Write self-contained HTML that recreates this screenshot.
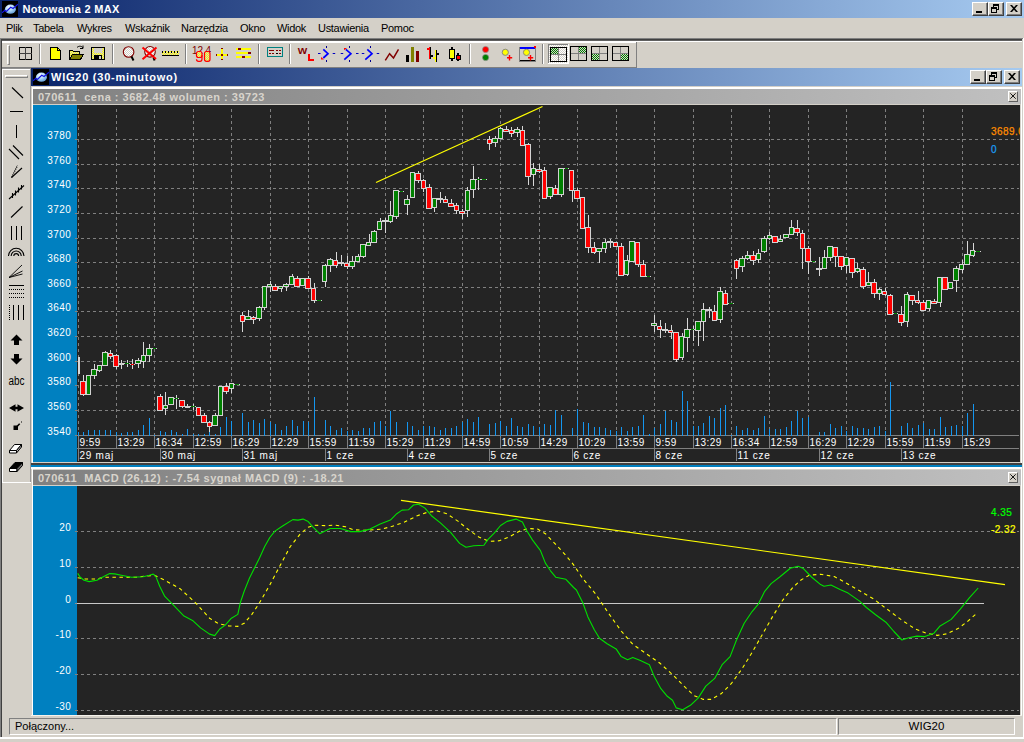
<!DOCTYPE html>
<html lang="pl"><head><meta charset="utf-8"><title>Notowania 2 MAX</title>
<style>
html,body{margin:0;padding:0}
body{width:1024px;height:742px;overflow:hidden;background:#d4d0c8;position:relative;font-family:"Liberation Sans",sans-serif;font-size:11px;color:#000}
.a{position:absolute}
.tb{position:absolute;height:18px;background:linear-gradient(to right,#0a246a 0%,#a6caf0 100%)}
.tt{position:absolute;color:#fff;font-weight:bold;font-size:11px;white-space:nowrap;line-height:13px}
.btn{position:absolute;width:16px;height:14px;background:#d4d0c8;box-sizing:border-box;border-top:1px solid #fff;border-left:1px solid #fff;border-right:1px solid #404040;border-bottom:1px solid #404040;box-shadow:inset -1px -1px 0 #808080}
.mi{position:absolute;top:22px;letter-spacing:-0.3px;line-height:13px;font-size:11px;white-space:nowrap}
.sep{position:absolute;top:44px;width:1px;height:20px;background:#808080;box-shadow:1px 0 0 #fff}
.hdr{position:absolute;left:33px;width:988px;height:15px;background:linear-gradient(to right,#808080 0%,#c0c0c0 100%);color:#d8d4cc;font-weight:bold;font-size:11px;line-height:15px;white-space:pre}
.hdr span{position:absolute;left:5px;top:1px}
.xb{position:absolute;width:10px;height:11px;background:#d4d0c8;border-top:1px solid #fff;border-left:1px solid #fff;border-right:1px solid #606060;border-bottom:1px solid #606060;box-sizing:border-box}
.sp{position:absolute;top:718px;height:17px;box-sizing:border-box;border-top:1px solid #808080;border-left:1px solid #808080;border-right:1px solid #fff;border-bottom:1px solid #fff;font-size:11px;line-height:14px;white-space:nowrap}
svg{position:absolute;left:0;top:0}
</style></head><body>
<div class="tb" style="left:0;top:0;width:1024px"></div>
<svg class="a" style="left:2px;top:1px" width="16" height="16" viewBox="0 0 16 16"><rect width="16" height="16" fill="#000"/><defs><radialGradient id="gl1" cx="0.4" cy="0.3" r="0.75"><stop offset="0" stop-color="#ffffff"/><stop offset="0.45" stop-color="#b4dcf8"/><stop offset="1" stop-color="#5c98d4"/></radialGradient></defs><ellipse cx="8.4" cy="8.2" rx="5.5" ry="4.6" fill="url(#gl1)"/><polyline points="0,11.700 2.900,9.300 4.400,10.400 8.700,6.300 11.100,7.500 16,3.200" fill="none" stroke="#1414e6" stroke-width="1.200"/></svg>
<div class="tt" style="left:22.5px;top:3px;letter-spacing:0.33px">Notowania 2 MAX</div>
<div class="btn" style="left:972px;top:2px"><div class="a" style="left:3px;top:8px;width:6px;height:2px;background:#000"></div></div><div class="btn" style="left:988px;top:2px"><div class="a" style="left:4px;top:1px;width:6px;height:6px;box-sizing:border-box;border:1px solid #000;border-top-width:2px"></div><div class="a" style="left:2px;top:4px;width:6px;height:6px;box-sizing:border-box;border:1px solid #000;border-top-width:2px;background:#d4d0c8"></div></div><div class="btn" style="left:1006px;top:2px"><svg class="a" style="left:3px;top:2px" width="8" height="7" viewBox="0 0 8 7"><path d="M0 0h2l2 2.300l2-2.300h2l-3 3.500l3 3.500h-2l-2-2.300l-2 2.300h-2l3-3.500z" fill="#000"/></svg></div>
<div class="mi" style="left:6px">Plik</div>
<div class="mi" style="left:33px">Tabela</div>
<div class="mi" style="left:77px">Wykres</div>
<div class="mi" style="left:125px">Wskaźnik</div>
<div class="mi" style="left:181px">Narzędzia</div>
<div class="mi" style="left:240px">Okno</div>
<div class="mi" style="left:277px">Widok</div>
<div class="mi" style="left:318px">Ustawienia</div>
<div class="mi" style="left:381px">Pomoc</div>
<div class="a" style="left:0;top:38px;width:1023px;height:1px;background:#808080"></div>
<div class="a" style="left:1px;top:39px;width:1021px;height:1px;background:#404040"></div>
<div class="a" style="left:0;top:38px;width:1px;height:699px;background:#808080"></div>
<div class="a" style="left:1px;top:39px;width:1px;height:698px;background:#404040"></div>
<div class="a" style="left:1023px;top:38px;width:1px;height:701px;background:#fff"></div>
<div class="a" style="left:0;top:737px;width:1024px;height:2px;background:#fff"></div>
<div class="a" style="left:2px;top:40px;width:1020px;height:1px;background:#606060"></div>
<div class="a" style="left:2px;top:41px;width:1020px;height:1px;background:#fff"></div>
<div class="a" style="left:2px;top:67px;width:635px;height:1px;background:#808080"></div>
<div class="a" style="left:636px;top:42px;width:1px;height:26px;background:#808080"></div>
<div class="a" style="left:2px;top:42px;width:634px;height:1px;background:#fff"></div>
<div class="a" style="left:2px;top:68px;width:29px;height:1px;background:#909090"></div>
<div class="a" style="left:7px;top:45px;width:3px;height:20px;box-sizing:border-box;border-left:1px solid #fff;border-top:1px solid #fff;border-right:1px solid #808080;border-bottom:1px solid #808080"></div>
<div class="sep" style="left:39px"></div>
<div class="sep" style="left:112px"></div>
<div class="sep" style="left:185px"></div>
<div class="sep" style="left:258px"></div>
<div class="sep" style="left:289px"></div>
<div class="sep" style="left:469px"></div>
<div class="sep" style="left:542px"></div>
<svg width="1024" height="70" viewBox="0 0 1024 70"><defs><pattern id="ck" width="2" height="2" patternUnits="userSpaceOnUse"><rect width="2" height="2" fill="#d4d0c8"/><rect width="1" height="1" fill="#008000"/><rect x="1" y="1" width="1" height="1" fill="#008000"/></pattern><pattern id="ckw" width="2" height="2" patternUnits="userSpaceOnUse"><rect width="2" height="2" fill="#fff"/><rect width="1" height="1" fill="#d4d0c8"/><rect x="1" y="1" width="1" height="1" fill="#d4d0c8"/></pattern><pattern id="cky" width="2" height="2" patternUnits="userSpaceOnUse"><rect width="2" height="2" fill="#ffff00"/><rect width="1" height="1" fill="#d4d0c8"/><rect x="1" y="1" width="1" height="1" fill="#d4d0c8"/></pattern></defs><g shape-rendering="crispEdges" fill="none" stroke="#000" stroke-width="1"><rect x="19.5" y="47.5" width="12" height="12"/><path d="M25.5 47v13M19 53.5h13" stroke="#404040"/></g><path d="M50.5 47.5h7l3 3v9h-10z" fill="#ffff00" stroke="#000" stroke-width="1" shape-rendering="crispEdges"/><path d="M57.5 47.5v3h3" fill="none" stroke="#000" stroke-width="1" shape-rendering="crispEdges"/><g shape-rendering="crispEdges"><path d="M69.5 59.5v-9h3l1 1h6v3" fill="url(#cky)" stroke="#000" stroke-width="1"/><path d="M69.5 59.5l3-5h11l-3 5z" fill="#808000" stroke="#000" stroke-width="1"/></g><path d="M77 47.5c2-2 5-1.5 6 0.5m0 -2.5v3h-3" fill="none" stroke="#000" stroke-width="1"/><g shape-rendering="crispEdges"><rect x="91.5" y="47.5" width="13" height="12" fill="url(#cky)" stroke="#000"/><rect x="94" y="48" width="8" height="5" fill="#d4d0c8"/><rect x="94" y="55" width="8" height="5" fill="#000"/><rect x="99" y="56" width="2" height="3" fill="#d4d0c8"/></g><circle cx="128.6" cy="52" r="5.3" fill="url(#ckw)" stroke="#800000" stroke-width="1.1"/><path d="M131.500 56.500l2 4" stroke="#000" stroke-width="2"/><circle cx="150" cy="51.8" r="5.3" fill="url(#ckw)" stroke="#800000" stroke-width="1.1"/><path d="M153.500 57.500l1 3" stroke="#000" stroke-width="2"/><path d="M142.500 47.500l13.500 11.500M156.500 47.500l-14 11.800" stroke="#ff0000" stroke-width="2"/><g shape-rendering="crispEdges"><rect x="162" y="51" width="17" height="4" fill="url(#cky)"/><rect x="162" y="55" width="17" height="1" fill="#000"/><path d="M162.500 51v2M165.500 51v2M168.500 51v2M171.500 51v2M174.500 51v2M177.500 51v2" stroke="#000"/></g><g font-family="Liberation Sans, sans-serif" fill="#800000"><text x="192" y="53.500" font-size="10">1</text><text x="197.500" y="53.500" font-size="10">2</text><text x="205.500" y="53.500" font-size="10">4</text></g><g fill="url(#cky)" stroke="#ff0000" stroke-width="1.2"><rect x="196.500" y="51.500" width="5.500" height="6" rx="2"/><path d="M202 55v4q0 2.300 -2 2.300h-1.500q-2 0 -2 -2" fill="none"/><rect x="204.500" y="51.500" width="5.500" height="9.800" rx="2"/></g><g shape-rendering="crispEdges"><rect x="216" y="54" width="12" height="2" fill="#ffff00"/><rect x="221" y="48" width="2" height="12" fill="#ffff00"/><rect x="221" y="54" width="2" height="2" fill="#800000"/><rect x="221" y="48" width="2" height="1" fill="#800000"/><rect x="221" y="59" width="2" height="1" fill="#800000"/><rect x="216" y="54" width="1" height="2" fill="#800000"/><rect x="227" y="54" width="1" height="2" fill="#800000"/></g><g shape-rendering="crispEdges"><rect x="236" y="48" width="15" height="2" fill="#ffff00"/><rect x="236" y="52" width="15" height="2" fill="#ffff00"/><rect x="236" y="56" width="15" height="2" fill="#ffff00"/><rect x="238" y="48" width="3" height="2" fill="#800000"/><rect x="248" y="52" width="3" height="2" fill="#800000"/><rect x="242" y="56" width="3" height="2" fill="#800000"/></g><g shape-rendering="crispEdges"><rect x="267.500" y="47.500" width="15" height="9" fill="#d4d0c8" stroke="#008080" stroke-width="1"/><path d="M269 50.500h5M276 50.500h2M279 50.500h2M269 53.500h2M272 53.500h2M279 53.500h2" stroke="#800000"/><path d="M276 53.500h2" stroke="#000"/></g><text x="297.800" y="54" font-family="Liberation Sans, sans-serif" font-weight="bold" font-size="9.600" fill="#800000" textLength="9.500" lengthAdjust="spacingAndGlyphs">W</text><path d="M308 54h2v5h3.500v2h-5.500z" fill="#ff0000" shape-rendering="crispEdges"/><path d="M323.300 49.400l4.700 4.300l-4.700 4.300" fill="none" stroke="#0000ff" stroke-width="1.700"/><path d="M345.800 49.400l5.100 4.300l-6.600 5.900" fill="none" stroke="#0000ff" stroke-width="1.700"/><path d="M367.300 49.400l4.700 4.300l-6.700 5.900" fill="none" stroke="#0000ff" stroke-width="1.700"/><path d="M326.5 46v2M326.5 60v2" stroke="#000090" stroke-width="1" shape-rendering="crispEdges"/><path d="M349.5 46v2M349.5 60v2" stroke="#000090" stroke-width="1" shape-rendering="crispEdges"/><path d="M370.5 46v2M370.5 60v2" stroke="#000090" stroke-width="1" shape-rendering="crispEdges"/><path d="M318 53.500h2.500M332.700 53.500h2.500M340.700 53.500h2.500M356 53.500h2.500M361.800 53.500h2.500M376.700 53.500h2.500" stroke="#0000c0" stroke-width="1.200"/><path d="M321 57v2.600h3z" fill="#ff0000"/><path d="M344 50.200v-2.300h3z" fill="#ff0000"/><path d="M385.300 60.400l4.300-6.700l3.900 4.300l5-8.600" fill="none" stroke="#800000" stroke-width="1.500"/><g shape-rendering="crispEdges"><rect x="406" y="55" width="3" height="7" fill="#000"/><rect x="411" y="47" width="3" height="15" fill="#808000"/><rect x="416" y="51" width="3" height="11" fill="#800000"/></g><g shape-rendering="crispEdges"><rect x="429" y="47" width="1" height="12" fill="#ff0000"/><rect x="430" y="47" width="1" height="12" fill="#000"/><rect x="427" y="48" width="2" height="2" fill="#ff0000"/><rect x="431" y="55" width="2" height="2" fill="#000"/><rect x="435" y="50" width="1" height="12" fill="#ffff00"/><rect x="436" y="50" width="1" height="12" fill="#000"/><rect x="433" y="57" width="2" height="2" fill="#ffff00"/><rect x="437" y="53" width="2" height="2" fill="#000"/></g><g shape-rendering="crispEdges"><rect x="451" y="47" width="2" height="14" fill="#000"/><rect x="449.500" y="49.500" width="5" height="9" fill="#ffff00" stroke="#000"/><rect x="457" y="53" width="2" height="8" fill="#000"/><rect x="456" y="55.500" width="4.500" height="3.500" fill="#ff0000" stroke="#000"/></g><circle cx="485.600" cy="49.500" r="3.100" fill="#ff0000" stroke="#909090" stroke-width="0.700"/><circle cx="485.600" cy="57.500" r="3.100" fill="#008000" stroke="#909090" stroke-width="0.700"/><circle cx="505.300" cy="52.300" r="3.100" fill="#ffff00" stroke="#808080" stroke-width="0.900"/><path d="M509.500 55v5.500M507 57.700h5.200" stroke="#ff0000" stroke-width="1.400"/><g shape-rendering="crispEdges"><rect x="520" y="47" width="15" height="14" fill="#d4d0c8"/><rect x="520" y="47" width="15" height="2" fill="#0000ff"/><rect x="534" y="46" width="2" height="2" fill="#ff0000"/><rect x="519" y="47" width="1" height="15" fill="#808080"/><rect x="535" y="48" width="1" height="14" fill="#808080"/><rect x="520" y="60" width="15" height="1" fill="#000"/><rect x="520" y="61" width="15" height="1" fill="#808080"/></g><circle cx="526.500" cy="52.400" r="3.100" fill="#ffff00" stroke="#808080" stroke-width="0.900"/><path d="M530.500 55v5.500M528 57.700h5.200" stroke="#ff0000" stroke-width="1.400"/><g shape-rendering="crispEdges"><rect x="548" y="44" width="21" height="20" fill="url(#ckw)"/><rect x="548" y="44" width="21" height="1" fill="#808080"/><rect x="548" y="44" width="1" height="20" fill="#808080"/><rect x="548" y="63" width="21" height="1" fill="#fff"/><rect x="568" y="44" width="1" height="20" fill="#fff"/></g><g shape-rendering="crispEdges"><rect x="551" y="48" width="8" height="7" fill="url(#ck)"/><path d="M558.5 48v13M551 54.5h15" stroke="#808080"/><rect x="550.5" y="47.5" width="16" height="14" fill="none" stroke="#000"/></g><g shape-rendering="crispEdges"><rect x="579" y="47" width="8" height="7" fill="url(#ck)"/><path d="M578.5 47v13M571 53.5h15" stroke="#808080"/><rect x="570.5" y="46.5" width="16" height="14" fill="none" stroke="#000"/></g><g shape-rendering="crispEdges"><rect x="592" y="54" width="8" height="7" fill="url(#ck)"/><path d="M599.5 47v13M592 53.5h15" stroke="#808080"/><rect x="591.5" y="46.5" width="16" height="14" fill="none" stroke="#000"/></g><g shape-rendering="crispEdges"><rect x="621" y="54" width="8" height="7" fill="url(#ck)"/><path d="M620.5 47v13M613 53.5h15" stroke="#808080"/><rect x="612.5" y="46.5" width="16" height="14" fill="none" stroke="#000"/></g></svg>
<div class="a" style="left:2px;top:69px;width:28px;height:1px;background:#fff"></div>
<div class="a" style="left:2px;top:69px;width:1px;height:414px;background:#fff"></div>
<div class="a" style="left:30px;top:69px;width:1px;height:413px;background:#989898"></div>
<div class="a" style="left:2px;top:482px;width:29px;height:1px;background:#fff"></div>
<div class="a" style="left:5px;top:75px;width:23px;height:3px;box-sizing:border-box;border-left:1px solid #fff;border-top:1px solid #fff;border-right:1px solid #808080;border-bottom:1px solid #808080"></div>
<svg width="32" height="742" viewBox="0 0 32 742"><g stroke="#000" stroke-width="1.1" fill="none"><path d="M12 87.5l11 10.5"/><path d="M10 111.5h13" shape-rendering="crispEdges"/><path d="M16.5 125v13" shape-rendering="crispEdges"/><path d="M9 149l10 10M13 145.5l10 10"/><path d="M11.5 177.5l10.5-9.5"/><path d="M11.500 177.500l6-12" stroke-dasharray="1.200 1" stroke-width="1.300"/><path d="M9 199l15-13.500M12.500 193v5M15.500 190.500v5M18.500 187.500v5M21.500 185v4.500"/><path d="M11 217.5l11.5-11"/><path d="M11.5 225.5v14M16.5 225.5v14M21.5 225.5v14" shape-rendering="crispEdges"/><path d="M8.5 256a7.7 7.7 0 0 1 15.4 0M11.2 256a5 5 0 0 1 10 0M13.8 256a2.4 2.4 0 0 1 4.8 0"/><path d="M9 277.5l13-12.5M9 277.5l13.5-6.5M9 277.5l13.5-3.5" stroke-width="0.9"/><g shape-rendering="crispEdges"><path d="M9 285.5h15"/><path d="M9 289.5h15M9 293.5h15M9 297.5h15" stroke-dasharray="1 1"/></g><g shape-rendering="crispEdges"><path d="M9.5 305v15" stroke-dasharray="1 1"/><path d="M13.5 305v15M18.5 305v15M23.5 305v15"/></g></g><g fill="#000"><path d="M16.5 334.5l6 6h-3.5v4.5h-5v-4.5h-3.5z"/><path d="M16.5 364.5l6-6h-3.5v-4.5h-5v4.5h-3.5z"/><path d="M9 408l6.500-3.800v2.500h2v-2.500l6.500 3.800l-6.500 3.800v-2.500h-2v2.500z"/><rect x="13.500" y="425.500" width="4.500" height="4.500"/><path d="M16.500 427l3.200-3.200" stroke="#000" stroke-width="1.600"/><rect x="21" y="421.500" width="1" height="1"/><path d="M9.500 450.500l5-6h7l-5 6z" fill="#fff" stroke="#000" stroke-width="1"/><path d="M9.500 450.500h7v2.500h-7z" fill="#fff" stroke="#000" stroke-width="1"/><path d="M16.500 450.500l5-6v2.500l-5 6z" fill="#b0b0b0" stroke="#000" stroke-width="1"/><path d="M9.500 468.500l5.500-6h7.500l-5.500 6z" fill="#000" stroke="#000" stroke-width="1"/><path d="M9.500 468.500h7.500v3h-7.500z" fill="#fff" stroke="#000" stroke-width="1"/><path d="M17 468.500l5.500-6v3l-5.500 6z" fill="#707070" stroke="#000" stroke-width="1"/></g><text x="8.5" y="385" font-family="Liberation Sans, sans-serif" font-size="12.5" fill="#000" textLength="16" lengthAdjust="spacingAndGlyphs">abc</text></svg>
<div class="tb" style="left:31px;top:68px;width:991px"></div>
<svg class="a" style="left:33px;top:69px" width="16" height="16" viewBox="0 0 16 16"><rect width="16" height="16" fill="#000"/><defs><radialGradient id="gl2" cx="0.4" cy="0.3" r="0.75"><stop offset="0" stop-color="#ffffff"/><stop offset="0.45" stop-color="#b4dcf8"/><stop offset="1" stop-color="#5c98d4"/></radialGradient></defs><ellipse cx="8.4" cy="8.2" rx="5.5" ry="4.6" fill="url(#gl2)"/><polyline points="0,11.700 2.900,9.300 4.400,10.400 8.700,6.300 11.100,7.500 16,3.200" fill="none" stroke="#1414e6" stroke-width="1.200"/></svg>
<div class="tt" style="left:51px;top:71px;letter-spacing:0.76px">WIG20 (30-minutowo)</div>
<div class="btn" style="left:970px;top:70px"><div class="a" style="left:3px;top:8px;width:6px;height:2px;background:#000"></div></div><div class="btn" style="left:986px;top:70px"><div class="a" style="left:4px;top:1px;width:6px;height:6px;box-sizing:border-box;border:1px solid #000;border-top-width:2px"></div><div class="a" style="left:2px;top:4px;width:6px;height:6px;box-sizing:border-box;border:1px solid #000;border-top-width:2px;background:#d4d0c8"></div></div><div class="btn" style="left:1004px;top:70px"><svg class="a" style="left:3px;top:2px" width="8" height="7" viewBox="0 0 8 7"><path d="M0 0h2l2 2.300l2-2.300h2l-3 3.500l3 3.500h-2l-2-2.300l-2 2.300h-2l3-3.500z" fill="#000"/></svg></div>
<div class="a" style="left:31px;top:86px;width:991px;height:1px;background:#d4d0c8"></div>
<div class="a" style="left:32px;top:87px;width:989px;height:2px;background:#fff"></div>
<div class="a" style="left:31px;top:86px;width:1px;height:630px;background:#d4d0c8"></div>
<div class="a" style="left:32px;top:87px;width:1px;height:629px;background:#fff"></div>
<div class="a" style="left:1020px;top:89px;width:1px;height:627px;background:#d4d0c8"></div>
<div class="a" style="left:1021px;top:87px;width:1px;height:629px;background:#fff"></div>
<div class="a" style="left:1022px;top:68px;width:1px;height:648px;background:#d4d0c8"></div>
<div class="hdr" style="top:89px"><span style="letter-spacing:0.5px">070611  cena : 3682.48 wolumen : 39723</span></div>
<div class="a" style="left:33px;top:104px;width:987px;height:1px;background:#d4d0c8"></div>
<div class="xb" style="left:1008px;top:91px"><svg class="a" style="left:1px;top:1px" width="6" height="6" viewBox="0 0 6 6"><path d="M0.300 0.300l5.400 5.400M5.700 0.300l-5.400 5.400" stroke="#000" stroke-width="0.900"/></svg></div>
<div class="a" style="left:33px;top:462px;width:987px;height:1px;background:#d4d0c8"></div>
<div class="a" style="left:31px;top:463px;width:991px;height:2px;background:#404040"></div>
<div class="a" style="left:31px;top:465px;width:991px;height:2px;background:#0080c0"></div>
<div class="a" style="left:31px;top:467px;width:991px;height:2px;background:#fff"></div>
<div class="a" style="left:33px;top:469px;width:988px;height:1px;background:#d4d0c8"></div>
<div class="hdr" style="top:470px"><span style="letter-spacing:0.5px">070611  MACD (26,12) : -7.54 sygnał MACD (9) : -18.21</span></div>
<div class="a" style="left:33px;top:485px;width:987px;height:1px;background:#d4d0c8"></div>
<div class="xb" style="left:1008px;top:472px"><svg class="a" style="left:1px;top:1px" width="6" height="6" viewBox="0 0 6 6"><path d="M0.300 0.300l5.400 5.400M5.700 0.300l-5.400 5.400" stroke="#000" stroke-width="0.900"/></svg></div>
<div class="a" style="left:31px;top:715px;width:991px;height:1px;background:#f4f2ec"></div>
<svg width="1024" height="742" viewBox="0 0 1024 742">
<rect x="33" y="105" width="44" height="357" fill="#0080c0"/>
<rect x="77" y="105" width="943" height="357" fill="#242424"/>
<rect x="33" y="486" width="44" height="229" fill="#0080c0"/>
<rect x="77" y="486" width="943" height="229" fill="#242424"/>
<g stroke="#808080" stroke-width="1" stroke-dasharray="3 3" fill="none">
<line x1="75" y1="139.5" x2="1019" y2="139.5"/>
<line x1="75" y1="164.5" x2="1019" y2="164.5"/>
<line x1="75" y1="188.5" x2="1019" y2="188.5"/>
<line x1="75" y1="213.5" x2="1019" y2="213.5"/>
<line x1="75" y1="238.5" x2="1019" y2="238.5"/>
<line x1="75" y1="262.5" x2="1019" y2="262.5"/>
<line x1="75" y1="287.5" x2="1019" y2="287.5"/>
<line x1="75" y1="311.5" x2="1019" y2="311.5"/>
<line x1="75" y1="336.5" x2="1019" y2="336.5"/>
<line x1="75" y1="361.5" x2="1019" y2="361.5"/>
<line x1="75" y1="385.5" x2="1019" y2="385.5"/>
<line x1="75" y1="410.5" x2="1019" y2="410.5"/>
<line x1="78.5" y1="109" x2="78.5" y2="435"/>
<line x1="116.5" y1="109" x2="116.5" y2="435"/>
<line x1="154.5" y1="109" x2="154.5" y2="435"/>
<line x1="193.5" y1="109" x2="193.5" y2="435"/>
<line x1="231.5" y1="109" x2="231.5" y2="435"/>
<line x1="270.5" y1="109" x2="270.5" y2="435"/>
<line x1="308.5" y1="109" x2="308.5" y2="435"/>
<line x1="347.5" y1="109" x2="347.5" y2="435"/>
<line x1="385.5" y1="109" x2="385.5" y2="435"/>
<line x1="423.5" y1="109" x2="423.5" y2="435"/>
<line x1="462.5" y1="109" x2="462.5" y2="435"/>
<line x1="500.5" y1="109" x2="500.5" y2="435"/>
<line x1="539.5" y1="109" x2="539.5" y2="435"/>
<line x1="577.5" y1="109" x2="577.5" y2="435"/>
<line x1="616.5" y1="109" x2="616.5" y2="435"/>
<line x1="654.5" y1="109" x2="654.5" y2="435"/>
<line x1="693.5" y1="109" x2="693.5" y2="435"/>
<line x1="731.5" y1="109" x2="731.5" y2="435"/>
<line x1="769.5" y1="109" x2="769.5" y2="435"/>
<line x1="808.5" y1="109" x2="808.5" y2="435"/>
<line x1="846.5" y1="109" x2="846.5" y2="435"/>
<line x1="885.5" y1="109" x2="885.5" y2="435"/>
<line x1="923.5" y1="109" x2="923.5" y2="435"/>
<line x1="962.5" y1="109" x2="962.5" y2="435"/>
<line x1="75" y1="531.5" x2="1019" y2="531.5"/>
<line x1="75" y1="567.5" x2="1019" y2="567.5"/>
<line x1="75" y1="638.5" x2="1019" y2="638.5"/>
<line x1="75" y1="674.5" x2="1019" y2="674.5"/>
<line x1="75" y1="710.5" x2="1019" y2="710.5"/>
</g>
<line x1="77" y1="603.5" x2="984" y2="603.5" stroke="#c8c8c8" stroke-width="1"/>
<line x1="75" y1="603.5" x2="77" y2="603.5" stroke="#8a8a8a" stroke-width="1"/>
<g stroke="#808080" stroke-width="1" fill="none">
<line x1="75" y1="435.5" x2="1019" y2="435.5"/>
<line x1="77" y1="448.5" x2="1019" y2="448.5"/>
<line x1="78.5" y1="436" x2="78.5" y2="449"/>
<line x1="116.5" y1="436" x2="116.5" y2="449"/>
<line x1="154.5" y1="436" x2="154.5" y2="449"/>
<line x1="193.5" y1="436" x2="193.5" y2="449"/>
<line x1="231.5" y1="436" x2="231.5" y2="449"/>
<line x1="270.5" y1="436" x2="270.5" y2="449"/>
<line x1="308.5" y1="436" x2="308.5" y2="449"/>
<line x1="347.5" y1="436" x2="347.5" y2="449"/>
<line x1="385.5" y1="436" x2="385.5" y2="449"/>
<line x1="423.5" y1="436" x2="423.5" y2="449"/>
<line x1="462.5" y1="436" x2="462.5" y2="449"/>
<line x1="500.5" y1="436" x2="500.5" y2="449"/>
<line x1="539.5" y1="436" x2="539.5" y2="449"/>
<line x1="577.5" y1="436" x2="577.5" y2="449"/>
<line x1="616.5" y1="436" x2="616.5" y2="449"/>
<line x1="654.5" y1="436" x2="654.5" y2="449"/>
<line x1="693.5" y1="436" x2="693.5" y2="449"/>
<line x1="731.5" y1="436" x2="731.5" y2="449"/>
<line x1="769.5" y1="436" x2="769.5" y2="449"/>
<line x1="808.5" y1="436" x2="808.5" y2="449"/>
<line x1="846.5" y1="436" x2="846.5" y2="449"/>
<line x1="885.5" y1="436" x2="885.5" y2="449"/>
<line x1="923.5" y1="436" x2="923.5" y2="449"/>
<line x1="962.5" y1="436" x2="962.5" y2="449"/>
<line x1="78.5" y1="449" x2="78.5" y2="461"/>
<line x1="160.5" y1="449" x2="160.5" y2="461"/>
<line x1="242.5" y1="449" x2="242.5" y2="461"/>
<line x1="325.5" y1="449" x2="325.5" y2="461"/>
<line x1="407.5" y1="449" x2="407.5" y2="461"/>
<line x1="489.5" y1="449" x2="489.5" y2="461"/>
<line x1="572.5" y1="449" x2="572.5" y2="461"/>
<line x1="654.5" y1="449" x2="654.5" y2="461"/>
<line x1="736.5" y1="449" x2="736.5" y2="461"/>
<line x1="819.5" y1="449" x2="819.5" y2="461"/>
<line x1="901.5" y1="449" x2="901.5" y2="461"/>
</g>
<g fill="#1496f0" shape-rendering="crispEdges">
<rect x="78" y="432" width="1" height="4"/>
<rect x="83" y="432" width="1" height="4"/>
<rect x="88" y="430" width="1" height="6"/>
<rect x="94" y="430" width="1" height="6"/>
<rect x="99" y="430" width="1" height="6"/>
<rect x="105" y="430" width="1" height="6"/>
<rect x="110" y="430" width="1" height="6"/>
<rect x="116" y="432" width="1" height="4"/>
<rect x="121" y="433" width="1" height="3"/>
<rect x="127" y="432" width="1" height="4"/>
<rect x="132" y="432" width="1" height="4"/>
<rect x="138" y="430" width="1" height="6"/>
<rect x="143" y="425" width="1" height="11"/>
<rect x="149" y="418" width="1" height="18"/>
<rect x="154" y="435" width="1" height="1"/>
<rect x="160" y="431" width="1" height="5"/>
<rect x="165" y="432" width="1" height="4"/>
<rect x="171" y="430" width="1" height="6"/>
<rect x="176" y="432" width="1" height="4"/>
<rect x="182" y="434" width="1" height="2"/>
<rect x="187" y="429" width="1" height="7"/>
<rect x="193" y="434" width="1" height="2"/>
<rect x="198" y="434" width="1" height="2"/>
<rect x="204" y="434" width="1" height="2"/>
<rect x="209" y="432" width="1" height="4"/>
<rect x="215" y="434" width="1" height="2"/>
<rect x="220" y="427" width="1" height="9"/>
<rect x="226" y="417" width="1" height="19"/>
<rect x="231" y="421" width="1" height="15"/>
<rect x="242" y="413" width="1" height="23"/>
<rect x="248" y="422" width="1" height="14"/>
<rect x="253" y="420" width="1" height="16"/>
<rect x="259" y="423" width="1" height="13"/>
<rect x="264" y="419" width="1" height="17"/>
<rect x="270" y="422" width="1" height="14"/>
<rect x="275" y="424" width="1" height="12"/>
<rect x="281" y="430" width="1" height="6"/>
<rect x="286" y="426" width="1" height="10"/>
<rect x="292" y="420" width="1" height="16"/>
<rect x="297" y="426" width="1" height="10"/>
<rect x="303" y="421" width="1" height="15"/>
<rect x="308" y="422" width="1" height="14"/>
<rect x="314" y="397" width="1" height="39"/>
<rect x="325" y="420" width="1" height="16"/>
<rect x="330" y="426" width="1" height="10"/>
<rect x="336" y="430" width="1" height="6"/>
<rect x="341" y="428" width="1" height="8"/>
<rect x="347" y="431" width="1" height="5"/>
<rect x="352" y="430" width="1" height="6"/>
<rect x="358" y="431" width="1" height="5"/>
<rect x="363" y="428" width="1" height="8"/>
<rect x="369" y="428" width="1" height="8"/>
<rect x="374" y="422" width="1" height="14"/>
<rect x="380" y="421" width="1" height="15"/>
<rect x="385" y="426" width="1" height="10"/>
<rect x="390" y="411" width="1" height="25"/>
<rect x="396" y="422" width="1" height="14"/>
<rect x="407" y="422" width="1" height="14"/>
<rect x="412" y="426" width="1" height="10"/>
<rect x="418" y="430" width="1" height="6"/>
<rect x="423" y="426" width="1" height="10"/>
<rect x="429" y="426" width="1" height="10"/>
<rect x="434" y="427" width="1" height="9"/>
<rect x="440" y="430" width="1" height="6"/>
<rect x="445" y="428" width="1" height="8"/>
<rect x="451" y="428" width="1" height="8"/>
<rect x="456" y="426" width="1" height="10"/>
<rect x="462" y="422" width="1" height="14"/>
<rect x="467" y="419" width="1" height="17"/>
<rect x="473" y="422" width="1" height="14"/>
<rect x="478" y="417" width="1" height="19"/>
<rect x="489" y="424" width="1" height="12"/>
<rect x="495" y="423" width="1" height="13"/>
<rect x="500" y="421" width="1" height="15"/>
<rect x="506" y="426" width="1" height="10"/>
<rect x="511" y="418" width="1" height="18"/>
<rect x="517" y="426" width="1" height="10"/>
<rect x="522" y="427" width="1" height="9"/>
<rect x="528" y="424" width="1" height="12"/>
<rect x="533" y="426" width="1" height="10"/>
<rect x="539" y="427" width="1" height="9"/>
<rect x="544" y="424" width="1" height="12"/>
<rect x="550" y="425" width="1" height="11"/>
<rect x="555" y="410" width="1" height="26"/>
<rect x="561" y="415" width="1" height="21"/>
<rect x="572" y="428" width="1" height="8"/>
<rect x="577" y="409" width="1" height="27"/>
<rect x="583" y="422" width="1" height="14"/>
<rect x="588" y="423" width="1" height="13"/>
<rect x="594" y="427" width="1" height="9"/>
<rect x="599" y="427" width="1" height="9"/>
<rect x="605" y="428" width="1" height="8"/>
<rect x="610" y="430" width="1" height="6"/>
<rect x="616" y="431" width="1" height="5"/>
<rect x="621" y="427" width="1" height="9"/>
<rect x="627" y="431" width="1" height="5"/>
<rect x="632" y="427" width="1" height="9"/>
<rect x="638" y="426" width="1" height="10"/>
<rect x="643" y="415" width="1" height="21"/>
<rect x="649" y="434" width="1" height="2"/>
<rect x="654" y="428" width="1" height="8"/>
<rect x="660" y="424" width="1" height="12"/>
<rect x="665" y="411" width="1" height="25"/>
<rect x="671" y="420" width="1" height="16"/>
<rect x="676" y="422" width="1" height="14"/>
<rect x="682" y="391" width="1" height="45"/>
<rect x="687" y="401" width="1" height="35"/>
<rect x="693" y="426" width="1" height="10"/>
<rect x="698" y="426" width="1" height="10"/>
<rect x="703" y="423" width="1" height="13"/>
<rect x="709" y="416" width="1" height="20"/>
<rect x="714" y="418" width="1" height="18"/>
<rect x="720" y="408" width="1" height="28"/>
<rect x="725" y="405" width="1" height="31"/>
<rect x="731" y="435" width="1" height="1"/>
<rect x="736" y="426" width="1" height="10"/>
<rect x="742" y="430" width="1" height="6"/>
<rect x="747" y="428" width="1" height="8"/>
<rect x="753" y="430" width="1" height="6"/>
<rect x="758" y="428" width="1" height="8"/>
<rect x="764" y="416" width="1" height="20"/>
<rect x="769" y="429" width="1" height="7"/>
<rect x="775" y="429" width="1" height="7"/>
<rect x="780" y="429" width="1" height="7"/>
<rect x="786" y="427" width="1" height="9"/>
<rect x="791" y="421" width="1" height="15"/>
<rect x="797" y="411" width="1" height="25"/>
<rect x="802" y="418" width="1" height="18"/>
<rect x="808" y="417" width="1" height="19"/>
<rect x="819" y="432" width="1" height="4"/>
<rect x="824" y="432" width="1" height="4"/>
<rect x="830" y="424" width="1" height="12"/>
<rect x="835" y="428" width="1" height="8"/>
<rect x="841" y="426" width="1" height="10"/>
<rect x="846" y="431" width="1" height="5"/>
<rect x="852" y="426" width="1" height="10"/>
<rect x="857" y="428" width="1" height="8"/>
<rect x="863" y="428" width="1" height="8"/>
<rect x="868" y="429" width="1" height="7"/>
<rect x="874" y="427" width="1" height="9"/>
<rect x="879" y="426" width="1" height="10"/>
<rect x="885" y="431" width="1" height="5"/>
<rect x="890" y="382" width="1" height="54"/>
<rect x="901" y="426" width="1" height="10"/>
<rect x="907" y="423" width="1" height="13"/>
<rect x="912" y="428" width="1" height="8"/>
<rect x="918" y="425" width="1" height="11"/>
<rect x="923" y="423" width="1" height="13"/>
<rect x="929" y="429" width="1" height="7"/>
<rect x="934" y="429" width="1" height="7"/>
<rect x="940" y="417" width="1" height="19"/>
<rect x="945" y="427" width="1" height="9"/>
<rect x="951" y="426" width="1" height="10"/>
<rect x="956" y="425" width="1" height="11"/>
<rect x="962" y="426" width="1" height="10"/>
<rect x="967" y="413" width="1" height="23"/>
<rect x="973" y="404" width="1" height="32"/>
</g>
<g shape-rendering="crispEdges">
<rect x="78" y="357" width="2" height="17" fill="#d8d8d8"/>
<rect x="83" y="375" width="1" height="21" fill="#d8d8d8"/>
<rect x="80" y="381" width="6" height="14" fill="#d2d2d2"/>
<rect x="81" y="382" width="4" height="12" fill="#ff0000"/>
<rect x="88" y="376" width="1" height="18" fill="#d8d8d8"/>
<rect x="86" y="375" width="5" height="20" fill="#d2d2d2"/>
<rect x="87" y="376" width="3" height="18" fill="#008000"/>
<rect x="94" y="364" width="1" height="15" fill="#d8d8d8"/>
<rect x="91" y="369" width="6" height="7" fill="#d2d2d2"/>
<rect x="92" y="370" width="4" height="5" fill="#008000"/>
<rect x="99" y="366" width="1" height="6" fill="#d8d8d8"/>
<rect x="97" y="365" width="5" height="6" fill="#d2d2d2"/>
<rect x="98" y="366" width="3" height="4" fill="#008000"/>
<rect x="105" y="351" width="1" height="14" fill="#d8d8d8"/>
<rect x="102" y="352" width="6" height="14" fill="#d2d2d2"/>
<rect x="103" y="353" width="4" height="12" fill="#008000"/>
<rect x="110" y="350" width="1" height="9" fill="#d8d8d8"/>
<rect x="108" y="353" width="5" height="4" fill="#d2d2d2"/>
<rect x="109" y="354" width="3" height="2" fill="#ff0000"/>
<rect x="116" y="354" width="1" height="15" fill="#d8d8d8"/>
<rect x="113" y="355" width="6" height="12" fill="#d2d2d2"/>
<rect x="114" y="356" width="4" height="10" fill="#ff0000"/>
<rect x="121" y="360" width="1" height="9" fill="#d8d8d8"/>
<rect x="119" y="363" width="5" height="2" fill="#d2d2d2"/>
<rect x="127" y="360" width="1" height="7" fill="#d8d8d8"/>
<rect x="124" y="363" width="6" height="1" fill="#d2d2d2"/>
<rect x="125" y="363" width="4" height="1" fill="#008000"/>
<rect x="132" y="359" width="1" height="10" fill="#d8d8d8"/>
<rect x="130" y="364" width="5" height="1" fill="#d2d2d2"/>
<rect x="131" y="364" width="3" height="1" fill="#ff0000"/>
<rect x="138" y="358" width="1" height="10" fill="#d8d8d8"/>
<rect x="135" y="360" width="6" height="4" fill="#d2d2d2"/>
<rect x="136" y="361" width="4" height="2" fill="#008000"/>
<rect x="143" y="342" width="1" height="26" fill="#d8d8d8"/>
<rect x="141" y="355" width="5" height="7" fill="#d2d2d2"/>
<rect x="142" y="356" width="3" height="5" fill="#008000"/>
<rect x="149" y="344" width="1" height="18" fill="#d8d8d8"/>
<rect x="146" y="348" width="6" height="8" fill="#d2d2d2"/>
<rect x="147" y="349" width="4" height="6" fill="#008000"/>
<rect x="152" y="348" width="5" height="1" fill="#d2d2d2"/>
<rect x="153" y="348" width="3" height="1" fill="#008000"/>
<rect x="160" y="394" width="1" height="17" fill="#d8d8d8"/>
<rect x="157" y="396" width="6" height="15" fill="#d2d2d2"/>
<rect x="158" y="397" width="4" height="13" fill="#ff0000"/>
<rect x="165" y="392" width="1" height="23" fill="#d8d8d8"/>
<rect x="163" y="405" width="5" height="4" fill="#d2d2d2"/>
<rect x="164" y="406" width="3" height="2" fill="#008000"/>
<rect x="171" y="398" width="1" height="6" fill="#d8d8d8"/>
<rect x="168" y="397" width="6" height="8" fill="#d2d2d2"/>
<rect x="169" y="398" width="4" height="6" fill="#008000"/>
<rect x="176" y="395" width="1" height="14" fill="#d8d8d8"/>
<rect x="174" y="398" width="5" height="1" fill="#d2d2d2"/>
<rect x="175" y="398" width="3" height="1" fill="#008000"/>
<rect x="182" y="401" width="1" height="7" fill="#d8d8d8"/>
<rect x="179" y="400" width="6" height="7" fill="#d2d2d2"/>
<rect x="180" y="401" width="4" height="5" fill="#ff0000"/>
<rect x="187" y="404" width="1" height="3" fill="#d8d8d8"/>
<rect x="185" y="406" width="5" height="2" fill="#d2d2d2"/>
<rect x="193" y="404" width="1" height="6" fill="#d8d8d8"/>
<rect x="190" y="406" width="6" height="1" fill="#d2d2d2"/>
<rect x="191" y="406" width="4" height="1" fill="#008000"/>
<rect x="198" y="407" width="1" height="8" fill="#d8d8d8"/>
<rect x="196" y="407" width="5" height="9" fill="#d2d2d2"/>
<rect x="197" y="408" width="3" height="7" fill="#ff0000"/>
<rect x="204" y="413" width="1" height="9" fill="#d8d8d8"/>
<rect x="201" y="415" width="6" height="8" fill="#d2d2d2"/>
<rect x="202" y="416" width="4" height="6" fill="#ff0000"/>
<rect x="209" y="421" width="1" height="11" fill="#d8d8d8"/>
<rect x="207" y="422" width="5" height="5" fill="#d2d2d2"/>
<rect x="208" y="423" width="3" height="3" fill="#ff0000"/>
<rect x="215" y="413" width="1" height="12" fill="#d8d8d8"/>
<rect x="212" y="415" width="6" height="11" fill="#d2d2d2"/>
<rect x="213" y="416" width="4" height="9" fill="#008000"/>
<rect x="220" y="387" width="1" height="28" fill="#d8d8d8"/>
<rect x="218" y="386" width="5" height="30" fill="#d2d2d2"/>
<rect x="219" y="387" width="3" height="28" fill="#008000"/>
<rect x="226" y="383" width="1" height="11" fill="#d8d8d8"/>
<rect x="223" y="386" width="6" height="6" fill="#d2d2d2"/>
<rect x="224" y="387" width="4" height="4" fill="#ff0000"/>
<rect x="231" y="383" width="1" height="10" fill="#d8d8d8"/>
<rect x="229" y="383" width="5" height="6" fill="#d2d2d2"/>
<rect x="230" y="384" width="3" height="4" fill="#008000"/>
<rect x="234" y="384" width="6" height="1" fill="#d2d2d2"/>
<rect x="235" y="384" width="4" height="1" fill="#008000"/>
<rect x="242" y="312" width="1" height="20" fill="#d8d8d8"/>
<rect x="240" y="315" width="5" height="7" fill="#d2d2d2"/>
<rect x="241" y="316" width="3" height="5" fill="#ff0000"/>
<rect x="248" y="310" width="1" height="9" fill="#d8d8d8"/>
<rect x="245" y="316" width="6" height="4" fill="#d2d2d2"/>
<rect x="246" y="317" width="4" height="2" fill="#008000"/>
<rect x="253" y="316" width="1" height="8" fill="#d8d8d8"/>
<rect x="251" y="317" width="5" height="3" fill="#d2d2d2"/>
<rect x="252" y="318" width="3" height="1" fill="#ff0000"/>
<rect x="259" y="306" width="1" height="15" fill="#d8d8d8"/>
<rect x="256" y="307" width="6" height="12" fill="#d2d2d2"/>
<rect x="257" y="308" width="4" height="10" fill="#008000"/>
<rect x="264" y="287" width="1" height="23" fill="#d8d8d8"/>
<rect x="262" y="286" width="5" height="22" fill="#d2d2d2"/>
<rect x="263" y="287" width="3" height="20" fill="#008000"/>
<rect x="270" y="281" width="1" height="11" fill="#d8d8d8"/>
<rect x="267" y="284" width="5" height="3" fill="#d2d2d2"/>
<rect x="268" y="285" width="3" height="1" fill="#008000"/>
<rect x="275" y="284" width="1" height="6" fill="#d8d8d8"/>
<rect x="272" y="286" width="6" height="5" fill="#d2d2d2"/>
<rect x="273" y="287" width="4" height="3" fill="#ff0000"/>
<rect x="281" y="287" width="1" height="5" fill="#d8d8d8"/>
<rect x="278" y="286" width="5" height="3" fill="#d2d2d2"/>
<rect x="279" y="287" width="3" height="1" fill="#008000"/>
<rect x="286" y="283" width="1" height="8" fill="#d8d8d8"/>
<rect x="283" y="284" width="6" height="3" fill="#d2d2d2"/>
<rect x="284" y="285" width="4" height="1" fill="#008000"/>
<rect x="292" y="274" width="1" height="11" fill="#d8d8d8"/>
<rect x="289" y="276" width="5" height="9" fill="#d2d2d2"/>
<rect x="290" y="277" width="3" height="7" fill="#008000"/>
<rect x="297" y="276" width="1" height="10" fill="#d8d8d8"/>
<rect x="294" y="278" width="6" height="9" fill="#d2d2d2"/>
<rect x="295" y="279" width="4" height="7" fill="#ff0000"/>
<rect x="303" y="279" width="1" height="7" fill="#d8d8d8"/>
<rect x="300" y="278" width="5" height="8" fill="#d2d2d2"/>
<rect x="301" y="279" width="3" height="6" fill="#008000"/>
<rect x="308" y="276" width="1" height="12" fill="#d8d8d8"/>
<rect x="305" y="278" width="6" height="11" fill="#d2d2d2"/>
<rect x="306" y="279" width="4" height="9" fill="#ff0000"/>
<rect x="314" y="283" width="1" height="20" fill="#d8d8d8"/>
<rect x="311" y="288" width="5" height="13" fill="#d2d2d2"/>
<rect x="312" y="289" width="3" height="11" fill="#ff0000"/>
<rect x="316" y="300" width="6" height="1" fill="#d2d2d2"/>
<rect x="317" y="300" width="4" height="1" fill="#008000"/>
<rect x="325" y="264" width="1" height="23" fill="#d8d8d8"/>
<rect x="322" y="265" width="5" height="17" fill="#d2d2d2"/>
<rect x="323" y="266" width="3" height="15" fill="#008000"/>
<rect x="330" y="258" width="1" height="14" fill="#d8d8d8"/>
<rect x="327" y="259" width="6" height="7" fill="#d2d2d2"/>
<rect x="328" y="260" width="4" height="5" fill="#008000"/>
<rect x="336" y="252" width="1" height="16" fill="#d8d8d8"/>
<rect x="333" y="260" width="5" height="6" fill="#d2d2d2"/>
<rect x="334" y="261" width="3" height="4" fill="#ff0000"/>
<rect x="341" y="255" width="1" height="11" fill="#d8d8d8"/>
<rect x="338" y="262" width="6" height="2" fill="#d2d2d2"/>
<rect x="347" y="256" width="1" height="13" fill="#d8d8d8"/>
<rect x="344" y="263" width="5" height="4" fill="#d2d2d2"/>
<rect x="345" y="264" width="3" height="2" fill="#ff0000"/>
<rect x="352" y="256" width="1" height="13" fill="#d8d8d8"/>
<rect x="349" y="261" width="6" height="6" fill="#d2d2d2"/>
<rect x="350" y="262" width="4" height="4" fill="#008000"/>
<rect x="358" y="254" width="1" height="8" fill="#d8d8d8"/>
<rect x="355" y="256" width="5" height="6" fill="#d2d2d2"/>
<rect x="356" y="257" width="3" height="4" fill="#008000"/>
<rect x="363" y="244" width="1" height="14" fill="#d8d8d8"/>
<rect x="360" y="244" width="6" height="13" fill="#d2d2d2"/>
<rect x="361" y="245" width="4" height="11" fill="#008000"/>
<rect x="369" y="234" width="1" height="11" fill="#d8d8d8"/>
<rect x="366" y="242" width="5" height="4" fill="#d2d2d2"/>
<rect x="367" y="243" width="3" height="2" fill="#008000"/>
<rect x="374" y="230" width="1" height="12" fill="#d8d8d8"/>
<rect x="371" y="231" width="6" height="12" fill="#d2d2d2"/>
<rect x="372" y="232" width="4" height="10" fill="#008000"/>
<rect x="380" y="218" width="1" height="11" fill="#d8d8d8"/>
<rect x="377" y="221" width="5" height="9" fill="#d2d2d2"/>
<rect x="378" y="222" width="3" height="7" fill="#008000"/>
<rect x="385" y="218" width="1" height="15" fill="#d8d8d8"/>
<rect x="382" y="220" width="6" height="2" fill="#d2d2d2"/>
<rect x="390" y="201" width="1" height="22" fill="#d8d8d8"/>
<rect x="388" y="215" width="5" height="7" fill="#d2d2d2"/>
<rect x="389" y="216" width="3" height="5" fill="#008000"/>
<rect x="396" y="191" width="1" height="28" fill="#d8d8d8"/>
<rect x="393" y="190" width="6" height="27" fill="#d2d2d2"/>
<rect x="394" y="191" width="4" height="25" fill="#008000"/>
<rect x="399" y="191" width="5" height="1" fill="#d2d2d2"/>
<rect x="400" y="191" width="3" height="1" fill="#008000"/>
<rect x="407" y="195" width="1" height="20" fill="#d8d8d8"/>
<rect x="404" y="199" width="6" height="6" fill="#d2d2d2"/>
<rect x="405" y="200" width="4" height="4" fill="#008000"/>
<rect x="412" y="173" width="1" height="24" fill="#d8d8d8"/>
<rect x="410" y="172" width="5" height="26" fill="#d2d2d2"/>
<rect x="411" y="173" width="3" height="24" fill="#008000"/>
<rect x="418" y="171" width="1" height="12" fill="#d8d8d8"/>
<rect x="415" y="173" width="6" height="8" fill="#d2d2d2"/>
<rect x="416" y="174" width="4" height="6" fill="#ff0000"/>
<rect x="423" y="179" width="1" height="13" fill="#d8d8d8"/>
<rect x="421" y="180" width="5" height="9" fill="#d2d2d2"/>
<rect x="422" y="181" width="3" height="7" fill="#ff0000"/>
<rect x="429" y="184" width="1" height="24" fill="#d8d8d8"/>
<rect x="426" y="187" width="6" height="22" fill="#d2d2d2"/>
<rect x="427" y="188" width="4" height="20" fill="#ff0000"/>
<rect x="434" y="199" width="1" height="13" fill="#d8d8d8"/>
<rect x="432" y="198" width="5" height="10" fill="#d2d2d2"/>
<rect x="433" y="199" width="3" height="8" fill="#008000"/>
<rect x="440" y="192" width="1" height="11" fill="#d8d8d8"/>
<rect x="437" y="198" width="6" height="2" fill="#d2d2d2"/>
<rect x="445" y="196" width="1" height="6" fill="#d8d8d8"/>
<rect x="443" y="199" width="5" height="4" fill="#d2d2d2"/>
<rect x="444" y="200" width="3" height="2" fill="#ff0000"/>
<rect x="451" y="199" width="1" height="7" fill="#d8d8d8"/>
<rect x="448" y="203" width="6" height="4" fill="#d2d2d2"/>
<rect x="449" y="204" width="4" height="2" fill="#ff0000"/>
<rect x="456" y="203" width="1" height="11" fill="#d8d8d8"/>
<rect x="454" y="205" width="5" height="6" fill="#d2d2d2"/>
<rect x="455" y="206" width="3" height="4" fill="#ff0000"/>
<rect x="462" y="209" width="1" height="10" fill="#d8d8d8"/>
<rect x="459" y="211" width="6" height="3" fill="#d2d2d2"/>
<rect x="460" y="212" width="4" height="1" fill="#ff0000"/>
<rect x="467" y="187" width="1" height="30" fill="#d8d8d8"/>
<rect x="465" y="190" width="5" height="21" fill="#d2d2d2"/>
<rect x="466" y="191" width="3" height="19" fill="#008000"/>
<rect x="473" y="166" width="1" height="32" fill="#d8d8d8"/>
<rect x="470" y="179" width="6" height="11" fill="#d2d2d2"/>
<rect x="471" y="180" width="4" height="9" fill="#008000"/>
<rect x="478" y="177" width="1" height="13" fill="#d8d8d8"/>
<rect x="476" y="179" width="5" height="1" fill="#d2d2d2"/>
<rect x="477" y="179" width="3" height="1" fill="#008000"/>
<rect x="481" y="179" width="6" height="1" fill="#d2d2d2"/>
<rect x="482" y="179" width="4" height="1" fill="#008000"/>
<rect x="489" y="136" width="1" height="14" fill="#d8d8d8"/>
<rect x="487" y="139" width="5" height="5" fill="#d2d2d2"/>
<rect x="488" y="140" width="3" height="3" fill="#ff0000"/>
<rect x="495" y="136" width="1" height="11" fill="#d8d8d8"/>
<rect x="492" y="138" width="6" height="5" fill="#d2d2d2"/>
<rect x="493" y="139" width="4" height="3" fill="#008000"/>
<rect x="500" y="127" width="1" height="11" fill="#d8d8d8"/>
<rect x="498" y="128" width="5" height="11" fill="#d2d2d2"/>
<rect x="499" y="129" width="3" height="9" fill="#008000"/>
<rect x="506" y="126" width="1" height="5" fill="#d8d8d8"/>
<rect x="503" y="129" width="6" height="3" fill="#d2d2d2"/>
<rect x="504" y="130" width="4" height="1" fill="#ff0000"/>
<rect x="511" y="127" width="1" height="10" fill="#d8d8d8"/>
<rect x="509" y="130" width="5" height="4" fill="#d2d2d2"/>
<rect x="510" y="131" width="3" height="2" fill="#ff0000"/>
<rect x="517" y="127" width="1" height="10" fill="#d8d8d8"/>
<rect x="514" y="129" width="6" height="4" fill="#d2d2d2"/>
<rect x="515" y="130" width="4" height="2" fill="#008000"/>
<rect x="522" y="126" width="1" height="19" fill="#d8d8d8"/>
<rect x="520" y="130" width="5" height="16" fill="#d2d2d2"/>
<rect x="521" y="131" width="3" height="14" fill="#ff0000"/>
<rect x="528" y="143" width="1" height="42" fill="#d8d8d8"/>
<rect x="525" y="144" width="6" height="33" fill="#d2d2d2"/>
<rect x="526" y="145" width="4" height="31" fill="#ff0000"/>
<rect x="533" y="163" width="1" height="23" fill="#d8d8d8"/>
<rect x="531" y="168" width="5" height="7" fill="#d2d2d2"/>
<rect x="532" y="169" width="3" height="5" fill="#008000"/>
<rect x="539" y="164" width="1" height="9" fill="#d8d8d8"/>
<rect x="536" y="169" width="6" height="3" fill="#d2d2d2"/>
<rect x="537" y="170" width="4" height="1" fill="#ff0000"/>
<rect x="544" y="167" width="1" height="31" fill="#d8d8d8"/>
<rect x="542" y="170" width="5" height="29" fill="#d2d2d2"/>
<rect x="543" y="171" width="3" height="27" fill="#ff0000"/>
<rect x="550" y="188" width="1" height="11" fill="#d8d8d8"/>
<rect x="547" y="187" width="6" height="10" fill="#d2d2d2"/>
<rect x="548" y="188" width="4" height="8" fill="#008000"/>
<rect x="555" y="185" width="1" height="9" fill="#d8d8d8"/>
<rect x="553" y="188" width="5" height="7" fill="#d2d2d2"/>
<rect x="554" y="189" width="3" height="5" fill="#ff0000"/>
<rect x="561" y="169" width="1" height="28" fill="#d8d8d8"/>
<rect x="558" y="168" width="6" height="27" fill="#d2d2d2"/>
<rect x="559" y="169" width="4" height="25" fill="#008000"/>
<rect x="564" y="168" width="5" height="1" fill="#d2d2d2"/>
<rect x="565" y="168" width="3" height="1" fill="#008000"/>
<rect x="572" y="171" width="1" height="31" fill="#d8d8d8"/>
<rect x="569" y="170" width="5" height="21" fill="#d2d2d2"/>
<rect x="570" y="171" width="3" height="19" fill="#ff0000"/>
<rect x="577" y="188" width="1" height="10" fill="#d8d8d8"/>
<rect x="574" y="190" width="6" height="9" fill="#d2d2d2"/>
<rect x="575" y="191" width="4" height="7" fill="#ff0000"/>
<rect x="583" y="198" width="1" height="31" fill="#d8d8d8"/>
<rect x="580" y="197" width="5" height="32" fill="#d2d2d2"/>
<rect x="581" y="198" width="3" height="30" fill="#ff0000"/>
<rect x="588" y="215" width="1" height="38" fill="#d8d8d8"/>
<rect x="585" y="227" width="6" height="21" fill="#d2d2d2"/>
<rect x="586" y="228" width="4" height="19" fill="#ff0000"/>
<rect x="594" y="242" width="1" height="12" fill="#d8d8d8"/>
<rect x="591" y="247" width="5" height="6" fill="#d2d2d2"/>
<rect x="592" y="248" width="3" height="4" fill="#ff0000"/>
<rect x="599" y="249" width="1" height="14" fill="#d8d8d8"/>
<rect x="596" y="248" width="6" height="4" fill="#d2d2d2"/>
<rect x="597" y="249" width="4" height="2" fill="#008000"/>
<rect x="605" y="239" width="1" height="14" fill="#d8d8d8"/>
<rect x="602" y="242" width="5" height="7" fill="#d2d2d2"/>
<rect x="603" y="243" width="3" height="5" fill="#008000"/>
<rect x="610" y="239" width="1" height="9" fill="#d8d8d8"/>
<rect x="607" y="241" width="6" height="2" fill="#d2d2d2"/>
<rect x="616" y="242" width="1" height="4" fill="#d8d8d8"/>
<rect x="613" y="242" width="5" height="5" fill="#d2d2d2"/>
<rect x="614" y="243" width="3" height="3" fill="#ff0000"/>
<rect x="621" y="243" width="1" height="32" fill="#d8d8d8"/>
<rect x="618" y="246" width="6" height="30" fill="#d2d2d2"/>
<rect x="619" y="247" width="4" height="28" fill="#ff0000"/>
<rect x="627" y="255" width="1" height="21" fill="#d8d8d8"/>
<rect x="624" y="260" width="5" height="15" fill="#d2d2d2"/>
<rect x="625" y="261" width="3" height="13" fill="#008000"/>
<rect x="632" y="242" width="1" height="19" fill="#d8d8d8"/>
<rect x="629" y="241" width="6" height="21" fill="#d2d2d2"/>
<rect x="630" y="242" width="4" height="19" fill="#008000"/>
<rect x="638" y="242" width="1" height="25" fill="#d8d8d8"/>
<rect x="635" y="242" width="5" height="23" fill="#d2d2d2"/>
<rect x="636" y="243" width="3" height="21" fill="#ff0000"/>
<rect x="643" y="260" width="1" height="16" fill="#d8d8d8"/>
<rect x="640" y="264" width="6" height="13" fill="#d2d2d2"/>
<rect x="641" y="265" width="4" height="11" fill="#ff0000"/>
<rect x="646" y="276" width="5" height="1" fill="#d2d2d2"/>
<rect x="647" y="276" width="3" height="1" fill="#008000"/>
<rect x="654" y="315" width="1" height="17" fill="#d8d8d8"/>
<rect x="651" y="323" width="6" height="3" fill="#d2d2d2"/>
<rect x="652" y="324" width="4" height="1" fill="#008000"/>
<rect x="660" y="320" width="1" height="18" fill="#d8d8d8"/>
<rect x="657" y="326" width="5" height="4" fill="#d2d2d2"/>
<rect x="658" y="327" width="3" height="2" fill="#ff0000"/>
<rect x="665" y="323" width="1" height="10" fill="#d8d8d8"/>
<rect x="662" y="329" width="6" height="2" fill="#d2d2d2"/>
<rect x="671" y="325" width="1" height="14" fill="#d8d8d8"/>
<rect x="668" y="330" width="5" height="3" fill="#d2d2d2"/>
<rect x="669" y="331" width="3" height="1" fill="#ff0000"/>
<rect x="676" y="333" width="1" height="29" fill="#d8d8d8"/>
<rect x="673" y="332" width="6" height="28" fill="#d2d2d2"/>
<rect x="674" y="333" width="4" height="26" fill="#ff0000"/>
<rect x="682" y="333" width="1" height="27" fill="#d8d8d8"/>
<rect x="679" y="336" width="5" height="22" fill="#d2d2d2"/>
<rect x="680" y="337" width="3" height="20" fill="#008000"/>
<rect x="687" y="318" width="1" height="34" fill="#d8d8d8"/>
<rect x="684" y="329" width="6" height="9" fill="#d2d2d2"/>
<rect x="685" y="330" width="4" height="7" fill="#008000"/>
<rect x="693" y="326" width="1" height="15" fill="#d8d8d8"/>
<rect x="690" y="329" width="5" height="1" fill="#d2d2d2"/>
<rect x="691" y="329" width="3" height="1" fill="#008000"/>
<rect x="698" y="322" width="1" height="24" fill="#d8d8d8"/>
<rect x="695" y="321" width="6" height="10" fill="#d2d2d2"/>
<rect x="696" y="322" width="4" height="8" fill="#008000"/>
<rect x="703" y="303" width="1" height="38" fill="#d8d8d8"/>
<rect x="701" y="309" width="5" height="13" fill="#d2d2d2"/>
<rect x="702" y="310" width="3" height="11" fill="#008000"/>
<rect x="709" y="307" width="1" height="11" fill="#d8d8d8"/>
<rect x="706" y="309" width="6" height="2" fill="#d2d2d2"/>
<rect x="714" y="305" width="1" height="15" fill="#d8d8d8"/>
<rect x="712" y="311" width="5" height="10" fill="#d2d2d2"/>
<rect x="713" y="312" width="3" height="8" fill="#ff0000"/>
<rect x="720" y="287" width="1" height="36" fill="#d8d8d8"/>
<rect x="717" y="291" width="6" height="29" fill="#d2d2d2"/>
<rect x="718" y="292" width="4" height="27" fill="#008000"/>
<rect x="725" y="290" width="1" height="14" fill="#d8d8d8"/>
<rect x="723" y="293" width="5" height="12" fill="#d2d2d2"/>
<rect x="724" y="294" width="3" height="10" fill="#ff0000"/>
<rect x="728" y="303" width="6" height="1" fill="#d2d2d2"/>
<rect x="729" y="303" width="4" height="1" fill="#008000"/>
<rect x="736" y="259" width="1" height="20" fill="#d8d8d8"/>
<rect x="734" y="260" width="5" height="9" fill="#d2d2d2"/>
<rect x="735" y="261" width="3" height="7" fill="#ff0000"/>
<rect x="742" y="256" width="1" height="16" fill="#d8d8d8"/>
<rect x="739" y="258" width="6" height="9" fill="#d2d2d2"/>
<rect x="740" y="259" width="4" height="7" fill="#008000"/>
<rect x="747" y="251" width="1" height="9" fill="#d8d8d8"/>
<rect x="745" y="255" width="5" height="4" fill="#d2d2d2"/>
<rect x="746" y="256" width="3" height="2" fill="#008000"/>
<rect x="753" y="251" width="1" height="14" fill="#d8d8d8"/>
<rect x="750" y="255" width="6" height="6" fill="#d2d2d2"/>
<rect x="751" y="256" width="4" height="4" fill="#ff0000"/>
<rect x="758" y="249" width="1" height="14" fill="#d8d8d8"/>
<rect x="756" y="253" width="5" height="7" fill="#d2d2d2"/>
<rect x="757" y="254" width="3" height="5" fill="#008000"/>
<rect x="764" y="236" width="1" height="17" fill="#d8d8d8"/>
<rect x="761" y="238" width="6" height="14" fill="#d2d2d2"/>
<rect x="762" y="239" width="4" height="12" fill="#008000"/>
<rect x="769" y="232" width="1" height="8" fill="#d8d8d8"/>
<rect x="767" y="235" width="5" height="4" fill="#d2d2d2"/>
<rect x="768" y="236" width="3" height="2" fill="#008000"/>
<rect x="775" y="236" width="1" height="6" fill="#d8d8d8"/>
<rect x="772" y="236" width="6" height="7" fill="#d2d2d2"/>
<rect x="773" y="237" width="4" height="5" fill="#ff0000"/>
<rect x="780" y="235" width="1" height="6" fill="#d8d8d8"/>
<rect x="778" y="239" width="5" height="3" fill="#d2d2d2"/>
<rect x="779" y="240" width="3" height="1" fill="#008000"/>
<rect x="786" y="235" width="1" height="3" fill="#d8d8d8"/>
<rect x="783" y="234" width="6" height="4" fill="#d2d2d2"/>
<rect x="784" y="235" width="4" height="2" fill="#008000"/>
<rect x="791" y="220" width="1" height="15" fill="#d8d8d8"/>
<rect x="789" y="227" width="5" height="8" fill="#d2d2d2"/>
<rect x="790" y="228" width="3" height="6" fill="#008000"/>
<rect x="797" y="220" width="1" height="16" fill="#d8d8d8"/>
<rect x="794" y="228" width="6" height="5" fill="#d2d2d2"/>
<rect x="795" y="229" width="4" height="3" fill="#ff0000"/>
<rect x="802" y="230" width="1" height="39" fill="#d8d8d8"/>
<rect x="800" y="233" width="5" height="16" fill="#d2d2d2"/>
<rect x="801" y="234" width="3" height="14" fill="#ff0000"/>
<rect x="808" y="246" width="1" height="28" fill="#d8d8d8"/>
<rect x="805" y="248" width="6" height="14" fill="#d2d2d2"/>
<rect x="806" y="249" width="4" height="12" fill="#ff0000"/>
<rect x="811" y="261" width="5" height="1" fill="#d2d2d2"/>
<rect x="812" y="261" width="3" height="1" fill="#008000"/>
<rect x="819" y="257" width="1" height="19" fill="#d8d8d8"/>
<rect x="816" y="268" width="6" height="2" fill="#d2d2d2"/>
<rect x="824" y="250" width="1" height="18" fill="#d8d8d8"/>
<rect x="822" y="257" width="5" height="12" fill="#d2d2d2"/>
<rect x="823" y="258" width="3" height="10" fill="#008000"/>
<rect x="830" y="247" width="1" height="14" fill="#d8d8d8"/>
<rect x="827" y="246" width="6" height="12" fill="#d2d2d2"/>
<rect x="828" y="247" width="4" height="10" fill="#008000"/>
<rect x="835" y="248" width="1" height="19" fill="#d8d8d8"/>
<rect x="833" y="247" width="5" height="10" fill="#d2d2d2"/>
<rect x="834" y="248" width="3" height="8" fill="#ff0000"/>
<rect x="841" y="256" width="1" height="14" fill="#d8d8d8"/>
<rect x="838" y="256" width="6" height="11" fill="#d2d2d2"/>
<rect x="839" y="257" width="4" height="9" fill="#ff0000"/>
<rect x="846" y="258" width="1" height="15" fill="#d8d8d8"/>
<rect x="844" y="257" width="5" height="9" fill="#d2d2d2"/>
<rect x="845" y="258" width="3" height="7" fill="#008000"/>
<rect x="852" y="259" width="1" height="19" fill="#d8d8d8"/>
<rect x="849" y="258" width="6" height="15" fill="#d2d2d2"/>
<rect x="850" y="259" width="4" height="13" fill="#ff0000"/>
<rect x="857" y="263" width="1" height="10" fill="#d8d8d8"/>
<rect x="855" y="268" width="5" height="4" fill="#d2d2d2"/>
<rect x="856" y="269" width="3" height="2" fill="#008000"/>
<rect x="863" y="267" width="1" height="22" fill="#d8d8d8"/>
<rect x="860" y="269" width="6" height="18" fill="#d2d2d2"/>
<rect x="861" y="270" width="4" height="16" fill="#ff0000"/>
<rect x="868" y="272" width="1" height="13" fill="#d8d8d8"/>
<rect x="866" y="282" width="5" height="4" fill="#d2d2d2"/>
<rect x="867" y="283" width="3" height="2" fill="#008000"/>
<rect x="874" y="279" width="1" height="19" fill="#d8d8d8"/>
<rect x="871" y="282" width="6" height="12" fill="#d2d2d2"/>
<rect x="872" y="283" width="4" height="10" fill="#ff0000"/>
<rect x="879" y="288" width="1" height="12" fill="#d8d8d8"/>
<rect x="877" y="289" width="5" height="5" fill="#d2d2d2"/>
<rect x="878" y="290" width="3" height="3" fill="#008000"/>
<rect x="885" y="288" width="1" height="8" fill="#d8d8d8"/>
<rect x="882" y="291" width="5" height="4" fill="#d2d2d2"/>
<rect x="883" y="292" width="3" height="2" fill="#ff0000"/>
<rect x="890" y="294" width="1" height="20" fill="#d8d8d8"/>
<rect x="887" y="295" width="6" height="20" fill="#d2d2d2"/>
<rect x="888" y="296" width="4" height="18" fill="#ff0000"/>
<rect x="893" y="313" width="5" height="1" fill="#d2d2d2"/>
<rect x="894" y="313" width="3" height="1" fill="#008000"/>
<rect x="901" y="306" width="1" height="20" fill="#d8d8d8"/>
<rect x="898" y="314" width="6" height="9" fill="#d2d2d2"/>
<rect x="899" y="315" width="4" height="7" fill="#ff0000"/>
<rect x="907" y="292" width="1" height="35" fill="#d8d8d8"/>
<rect x="904" y="294" width="5" height="28" fill="#d2d2d2"/>
<rect x="905" y="295" width="3" height="26" fill="#008000"/>
<rect x="912" y="296" width="1" height="9" fill="#d8d8d8"/>
<rect x="909" y="295" width="6" height="6" fill="#d2d2d2"/>
<rect x="910" y="296" width="4" height="4" fill="#ff0000"/>
<rect x="918" y="291" width="1" height="13" fill="#d8d8d8"/>
<rect x="915" y="300" width="5" height="3" fill="#d2d2d2"/>
<rect x="916" y="301" width="3" height="1" fill="#ff0000"/>
<rect x="923" y="300" width="1" height="10" fill="#d8d8d8"/>
<rect x="920" y="302" width="6" height="9" fill="#d2d2d2"/>
<rect x="921" y="303" width="4" height="7" fill="#ff0000"/>
<rect x="929" y="301" width="1" height="10" fill="#d8d8d8"/>
<rect x="926" y="300" width="5" height="9" fill="#d2d2d2"/>
<rect x="927" y="301" width="3" height="7" fill="#008000"/>
<rect x="934" y="299" width="1" height="5" fill="#d8d8d8"/>
<rect x="931" y="301" width="6" height="3" fill="#d2d2d2"/>
<rect x="932" y="302" width="4" height="1" fill="#ff0000"/>
<rect x="940" y="278" width="1" height="29" fill="#d8d8d8"/>
<rect x="937" y="277" width="5" height="26" fill="#d2d2d2"/>
<rect x="938" y="278" width="3" height="24" fill="#008000"/>
<rect x="945" y="278" width="1" height="11" fill="#d8d8d8"/>
<rect x="942" y="277" width="6" height="13" fill="#d2d2d2"/>
<rect x="943" y="278" width="4" height="11" fill="#ff0000"/>
<rect x="951" y="283" width="1" height="6" fill="#d8d8d8"/>
<rect x="948" y="282" width="5" height="7" fill="#d2d2d2"/>
<rect x="949" y="283" width="3" height="5" fill="#008000"/>
<rect x="956" y="266" width="1" height="26" fill="#d8d8d8"/>
<rect x="953" y="268" width="6" height="13" fill="#d2d2d2"/>
<rect x="954" y="269" width="4" height="11" fill="#008000"/>
<rect x="962" y="260" width="1" height="13" fill="#d8d8d8"/>
<rect x="959" y="264" width="5" height="6" fill="#d2d2d2"/>
<rect x="960" y="265" width="3" height="4" fill="#008000"/>
<rect x="967" y="241" width="1" height="23" fill="#d8d8d8"/>
<rect x="964" y="254" width="6" height="11" fill="#d2d2d2"/>
<rect x="965" y="255" width="4" height="9" fill="#008000"/>
<rect x="973" y="243" width="1" height="14" fill="#d8d8d8"/>
<rect x="970" y="250" width="5" height="6" fill="#d2d2d2"/>
<rect x="971" y="251" width="3" height="4" fill="#008000"/>
<rect x="975" y="251" width="6" height="1" fill="#d2d2d2"/>
<rect x="976" y="251" width="4" height="1" fill="#008000"/>
</g>
<line x1="376" y1="182.5" x2="542.5" y2="106.5" stroke="#ffff00" stroke-width="1.15"/>
<line x1="401" y1="500.4" x2="1005" y2="584.6" stroke="#ffff00" stroke-width="1.15"/>
<polyline points="77.7,577.7 85.4,579.0 95.6,579.0 105.9,577.2 121.2,577.2 136.6,577.2 146.8,575.9 154.5,575.4 164.8,580.3 180.1,588.7 195.5,602.8 209.6,618.2 218.6,623.8 228.8,625.9 237.8,626.4 244.2,623.3 251.9,614.4 259.5,602.8 269.8,584.9 280.0,565.7 290.3,546.5 300.5,533.7 308.2,527.3 314.6,525.2 325.0,525.6 335.4,525.2 345.6,526.8 353.3,529.8 366.1,530.3 381.5,529.1 391.7,526.5 404.5,522.1 417.3,515.7 427.6,512.2 437.8,511.1 446.8,513.7 458.3,521.4 468.6,529.8 478.8,537.0 489.1,541.4 499.3,540.8 509.5,536.7 519.8,531.1 528.8,528.5 537.7,529.1 545.4,533.7 555.7,544.4 565.9,555.4 573.6,564.9 582.8,578.5 595.6,593.9 608.4,613.1 621.2,631.0 632.8,644.3 646.8,654.1 659.7,663.0 672.5,674.6 685.3,687.4 694.2,695.6 703.2,699.4 710.9,699.4 721.1,693.8 731.4,683.5 741.6,669.4 751.9,652.8 762.1,634.9 772.4,616.9 782.6,600.3 792.8,587.5 801.0,580.0 809.2,575.2 820.6,574.3 834.4,576.6 845.8,582.8 859.6,590.8 873.3,598.8 887.0,609.1 900.8,619.4 914.5,628.6 926.0,633.2 937.4,635.4 946.6,633.8 958.0,628.6 967.2,621.7 976.4,613.7" fill="none" stroke="#ffff00" stroke-width="1.1" stroke-dasharray="3.5 3.5"/>
<polyline points="77.7,573.4 80.2,577.2 84.0,580.3 89.2,581.6 96.9,580.3 103.3,576.7 109.7,573.6 114.8,573.9 121.2,575.2 131.5,577.2 143.0,576.7 149.4,575.2 153.2,574.1 155.8,576.4 159.7,586.2 164.8,596.4 172.5,604.1 184.0,616.1 193.0,620.8 200.6,627.9 209.6,634.1 214.7,635.6 219.8,629.0 225.0,625.4 231.4,618.2 237.8,614.4 240.3,602.8 244.2,591.3 249.3,578.5 259.5,558.0 264.7,546.5 269.8,537.5 274.9,531.1 282.6,526.0 292.8,519.6 298.0,520.1 303.1,519.1 308.2,521.6 313.3,527.3 319.7,533.7 326.1,530.6 330.2,528.5 340.5,528.5 350.7,531.6 359.7,531.6 370.0,529.1 380.2,523.9 390.4,520.1 396.8,513.7 402.0,510.1 408.4,509.8 413.5,505.0 418.6,504.2 425.0,508.1 431.4,515.7 440.4,522.9 450.6,532.4 459.6,543.4 466.0,547.2 473.7,545.7 483.9,545.2 487.8,539.6 494.2,533.2 500.6,525.5 507.0,521.4 516.0,519.1 522.4,522.1 526.2,529.8 532.6,540.1 540.3,550.3 545.4,563.1 550.5,570.8 555.7,577.2 565.9,579.3 573.6,587.5 576.4,590.0 582.8,602.8 587.9,616.9 594.3,629.7 599.5,638.2 607.1,643.8 616.1,648.9 621.2,656.6 627.6,659.7 632.8,657.4 640.4,660.5 649.4,664.8 654.5,677.1 660.9,688.7 667.3,696.3 672.5,700.2 676.3,707.9 682.7,709.7 690.4,705.3 698.1,698.1 705.8,686.1 714.7,678.4 722.4,664.3 730.1,656.6 736.5,640.0 744.2,623.3 751.9,611.8 758.3,604.1 764.7,591.3 771.1,583.6 780.0,576.7 790.3,568.3 798.0,566.2 803.4,568.6 811.5,577.0 820.6,584.6 824.0,586.2 830.9,585.0 840.1,589.6 848.1,593.1 859.6,601.1 866.4,607.5 875.6,614.8 885.9,622.2 893.9,631.5 901.9,640.0 908.8,637.7 916.8,636.1 924.8,636.6 934.0,633.2 939.7,626.3 951.2,619.4 960.3,609.1 969.5,597.6 978.2,588.0" fill="none" stroke="#00e000" stroke-width="1.1" stroke-linejoin="round"/>
<g font-family="Liberation Sans, sans-serif" font-size="10" letter-spacing="0.45" fill="#ffffff" text-anchor="end">
<text x="71.2" y="138.8">3780</text>
<text x="71.2" y="163.8">3760</text>
<text x="71.2" y="187.8">3740</text>
<text x="71.2" y="212.8">3720</text>
<text x="71.2" y="237.8">3700</text>
<text x="71.2" y="261.8">3680</text>
<text x="71.2" y="286.8">3660</text>
<text x="71.2" y="310.8">3640</text>
<text x="71.2" y="335.8">3620</text>
<text x="71.2" y="360.8">3600</text>
<text x="71.2" y="384.8">3580</text>
<text x="71.2" y="409.8">3560</text>
<text x="71.2" y="434.8">3540</text>
<text x="71.2" y="530.8">20</text>
<text x="71.2" y="566.8">10</text>
<text x="71.2" y="602.8">0</text>
<text x="71.2" y="637.8">-10</text>
<text x="71.2" y="673.8">-20</text>
<text x="71.2" y="709.8">-30</text>
</g>
<g font-family="Liberation Sans, sans-serif" font-size="10" letter-spacing="0.45" fill="#ffffff">
<text x="79.6" y="446">9:59</text>
<text x="117.6" y="446">13:29</text>
<text x="155.6" y="446">16:34</text>
<text x="194.6" y="446">12:59</text>
<text x="232.6" y="446">16:29</text>
<text x="271.6" y="446">12:29</text>
<text x="309.6" y="446">15:59</text>
<text x="348.6" y="446">11:59</text>
<text x="386.6" y="446">15:29</text>
<text x="424.6" y="446">11:29</text>
<text x="463.6" y="446">14:59</text>
<text x="501.6" y="446">10:59</text>
<text x="540.6" y="446">14:29</text>
<text x="578.6" y="446">10:29</text>
<text x="617.6" y="446">13:59</text>
<text x="655.6" y="446">9:59</text>
<text x="694.6" y="446">13:29</text>
<text x="732.6" y="446">16:34</text>
<text x="770.6" y="446">12:59</text>
<text x="809.6" y="446">16:29</text>
<text x="847.6" y="446">12:29</text>
<text x="886.6" y="446">15:59</text>
<text x="924.6" y="446">11:59</text>
<text x="963.6" y="446">15:29</text>
<text x="79.6" y="459" letter-spacing="0.7">29 maj</text>
<text x="161.6" y="459" letter-spacing="0.7">30 maj</text>
<text x="243.6" y="459" letter-spacing="0.7">31 maj</text>
<text x="326.6" y="459" letter-spacing="0.7">1 cze</text>
<text x="408.6" y="459" letter-spacing="0.7">4 cze</text>
<text x="490.6" y="459" letter-spacing="0.7">5 cze</text>
<text x="573.6" y="459" letter-spacing="0.7">6 cze</text>
<text x="655.6" y="459" letter-spacing="0.7">8 cze</text>
<text x="737.6" y="459" letter-spacing="0.7">11 cze</text>
<text x="820.6" y="459" letter-spacing="0.7">12 cze</text>
<text x="902.6" y="459" letter-spacing="0.7">13 cze</text>
</g>
<clipPath id="cr"><rect x="77" y="105" width="943" height="357"/></clipPath>
<g font-family="Liberation Sans, sans-serif" font-size="10" letter-spacing="0.45">
<text x="991" y="135" fill="#ff8c00" stroke="#ff8c00" stroke-width="0.25" clip-path="url(#cr)">3689.05</text>
<text x="991" y="152.5" fill="#1a9df5" stroke="#1a9df5" stroke-width="0.25">0</text>
<text x="991" y="516" fill="#00ff00" stroke="#00ff00" stroke-width="0.2">4.35</text>
<text x="991" y="533" fill="#ffff00" stroke="#ffff00" stroke-width="0.2">-2.32</text>
</g>
</svg>
<div class="sp" style="left:9px;width:828px;padding-left:5px">Połączony...</div>
<div class="sp" style="left:838px;width:177px;text-align:center;font-size:11.5px">WIG20</div>
</body></html>
